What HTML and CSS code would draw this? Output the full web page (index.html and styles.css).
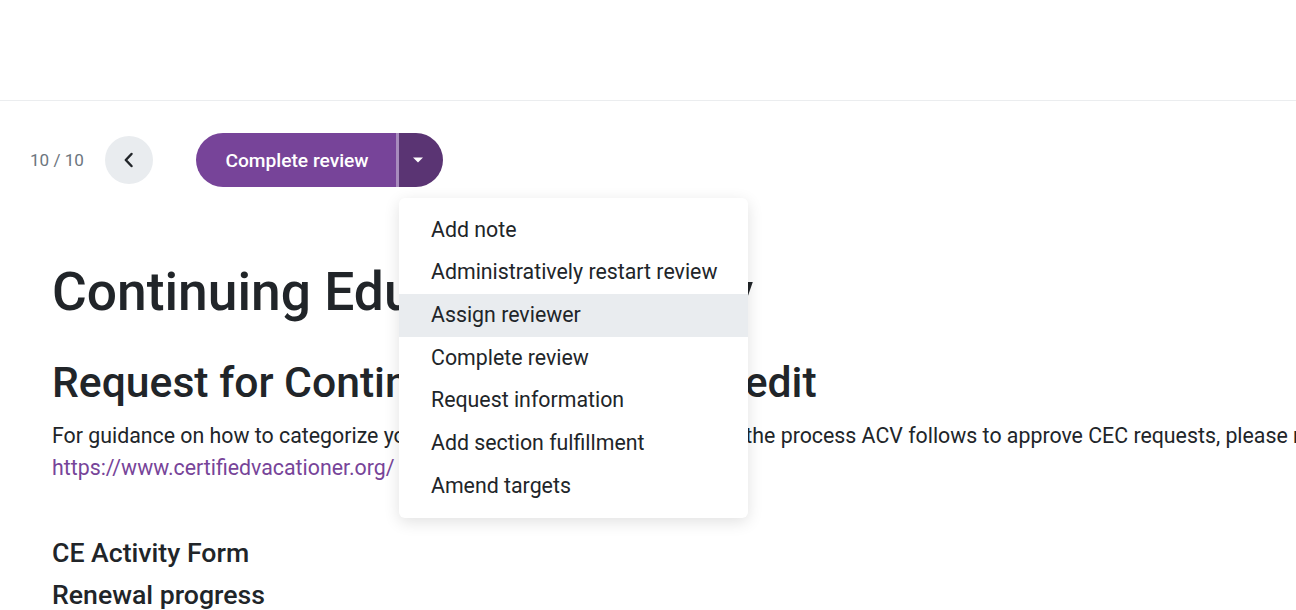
FILE: index.html
```html
<!DOCTYPE html>
<html>
<head>
<meta charset="utf-8">
<link rel="stylesheet" href="styles.css">
</head>
<body>
<header class="topbar"></header>
<div class="toolbar">
  <span class="counter">10 / 10</span>
  <button class="back-btn" aria-label="Previous">
    <svg width="16" height="16" viewBox="0 0 16 16"><path d="M10.5 2 L4.8 8 L10.5 14" fill="none" stroke="#212529" stroke-width="2.5" stroke-linecap="round" stroke-linejoin="round"/></svg>
  </button>
  <div class="split">
    <button class="split-main">Complete review</button>
    <span class="split-divider"></span>
    <button class="split-toggle" aria-label="More actions">
      <svg width="12" height="8" viewBox="0 0 12 8"><path d="M1 1.5 H11 L6 6.5 Z" fill="#ffffff"/></svg>
    </button>
    <ul class="menu">
      <li class="menu-item">Add note</li>
      <li class="menu-item">Administratively restart review</li>
      <li class="menu-item active">Assign reviewer</li>
      <li class="menu-item">Complete review</li>
      <li class="menu-item">Request information</li>
      <li class="menu-item">Add section fulfillment</li>
      <li class="menu-item">Amend targets</li>
    </ul>
  </div>
</div>
<main class="content">
  <h1 class="title">Continuing Education Activity</h1>
  <h2 class="subtitle">Request for Continuing Education Credit</h2>
  <div class="intro">
    <p class="intro-line">For guidance on how to categorize your activities and for more details on the process ACV follows to approve CEC requests, please refer to</p>
    <a class="link" href="#">https://www.certifiedvacationer.org/</a>
  </div>
  <h3 class="section first">CE Activity Form</h3>
  <h3 class="section">Renewal progress</h3>
</main>
</body>
</html>
```
FILE: styles.css
```css
* { box-sizing: border-box; }
html, body {
  margin: 0;
  padding: 0;
  background: #ffffff;
  font-family: Roboto, "Noto Sans", Arial, sans-serif;
  color: #212529;
  overflow: hidden;
  width: 1296px;
  height: 610px;
}
.topbar {
  height: 101px;
  border-bottom: 1px solid #ebedef;
}
.toolbar {
  display: flex;
  align-items: center;
  padding: 32px 0 0 30px;
  height: 86px;
}
.counter {
  font-size: 17.07px;
  color: #6c757d;
  width: 54px;
}
.back-btn {
  margin-left: 21px;
  width: 48px;
  height: 48px;
  border-radius: 50%;
  border: none;
  background: #e9ecef;
  display: flex;
  align-items: center;
  justify-content: center;
  padding: 0;
}
.split {
  position: relative;
  display: flex;
  margin-left: 43px;
  height: 54px;
}
.split-main {
  border: none;
  background: #774499;
  color: #ffffff;
  font-family: inherit;
  font-size: 19.2px;
  font-weight: 500;
  width: 200px;
  padding: 0 0 0 2px;
  border-radius: 27px 0 0 27px;
}
.split-divider {
  width: 3px;
  background: #a88bbd;
}
.split-toggle {
  border: none;
  background: #5a3473;
  width: 44px;
  padding: 0 6px 0 0;
  border-radius: 0 27px 27px 0;
  display: flex;
  align-items: center;
  justify-content: center;
}
.menu {
  position: absolute;
  top: 65px;
  left: 203px;
  width: 349px;
  margin: 0;
  padding: 10.67px 0;
  list-style: none;
  background: #ffffff;
  border-radius: 6px;
  box-shadow: 0 4px 16px rgba(0, 0, 0, 0.12);
  z-index: 10;
}
.menu-item {
  height: 42.67px;
  line-height: 42.67px;
  padding-left: 32px;
  font-size: 21.33px;
  color: #212529;
  white-space: nowrap;
}
.menu-item.active {
  background: #e9ecef;
}
.content {
  padding: 0 0 0 52px;
  overflow: hidden;
}
.title {
  margin: 73px 0 0 0;
  font-size: 53.33px;
  font-weight: 500;
  line-height: 64px;
  white-space: nowrap;
}
.subtitle {
  margin: 33px 0 0 0;
  font-size: 42.67px;
  font-weight: 500;
  line-height: 51.2px;
  white-space: nowrap;
}
.intro {
  margin: 12px 0 0 0;
  font-size: 21.33px;
  line-height: 32px;
  overflow: hidden;
}
.intro-line {
  margin: 0;
  white-space: nowrap;
}
.link {
  display: inline-block;
  color: #774499;
  text-decoration: none;
}
.section {
  margin: 0;
  font-size: 26.67px;
  font-weight: 500;
  line-height: 42px;
}
.section.first {
  margin-top: 48px;
}
```
